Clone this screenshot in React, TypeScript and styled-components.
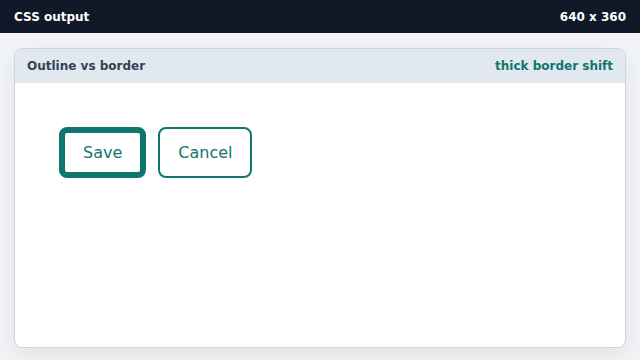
import styled, { createGlobalStyle } from 'styled-components'

const Global = createGlobalStyle`
    html, body, #root {
        margin: 0;
        height: 100%;
    }

    body {
        font-family: "DejaVu Sans", "Noto Sans", sans-serif;
        background: #f3f4f6;
    }

    * {
        box-sizing: border-box;
    }
`;

const Page = styled.div`
    display: flex;
    flex-direction: column;
    width: 640px;
    height: 360px;
    background: #f3f4f6;
`;

const TopBar = styled.div`
    display: flex;
    justify-content: space-between;
    align-items: center;
    height: 33px;
    padding: 0 14px;
    background: #111827;
    color: #ffffff;
    font-size: 12px;
    font-weight: bold;
`;

const Stage = styled.div`
    flex: 1;
    padding: 15px 14px 12px;
    display: flex;
`;

const Card = styled.div`
    flex: 1;
    display: flex;
    flex-direction: column;
    background: #ffffff;
    border: 1px solid #cbd5e1;
    border-radius: 8px;
    overflow: hidden;
    box-shadow: 0 8px 24px rgba(15, 23, 42, 0.08);
`;

const CardHeader = styled.div`
    display: flex;
    justify-content: space-between;
    align-items: center;
    height: 34px;
    padding: 0 12px;
    background: #e2e8f0;
    font-size: 12px;
    font-weight: bold;
    color: #334155;

    .note {
        color: #0f766e;
    }
`;

const CardBody = styled.div`
    display: flex;
    gap: 12px;
    padding: 44px 44px;
`;

const Button = styled.button<{ $thick?: boolean }>`
    height: 51px;
    padding: 0 18px;
    background: #ffffff;
    border: ${p => (p.$thick ? '6px' : '2px')} solid #0f766e;
    border-radius: 8px;
    color: #0f766e;
    font-family: "DejaVu Sans", sans-serif;
    font-size: 16px;
    cursor: pointer;
`;

const App = () => {
    return (
        <Page>
            <Global />
            <TopBar>
                <span>CSS output</span>
                <span>640 x 360</span>
            </TopBar>
            <Stage>
                <Card>
                    <CardHeader>
                        <span>Outline vs border</span>
                        <span className="note">thick border shift</span>
                    </CardHeader>
                    <CardBody>
                        <Button $thick>Save</Button>
                        <Button>Cancel</Button>
                    </CardBody>
                </Card>
            </Stage>
        </Page>
    );
}

export default App;
